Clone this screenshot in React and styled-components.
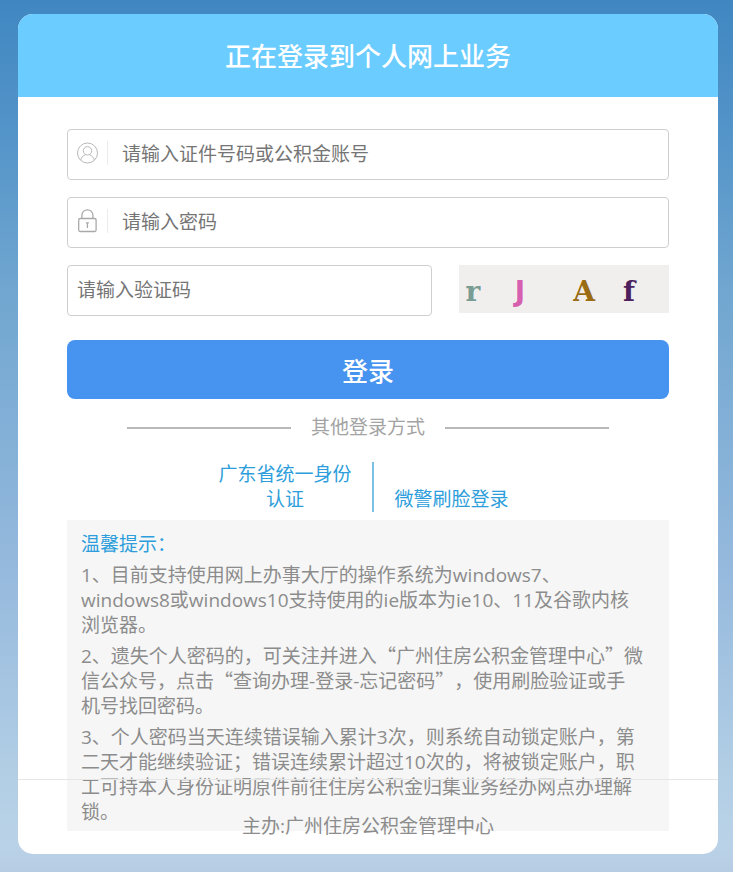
import React from 'react'
import styled, { createGlobalStyle } from 'styled-components'

const notes = [
    <>1、目前支持使用网上办事大厅的操作系统为windows7、<br/>windows8或windows10支持使用的ie版本为ie10、11及谷歌内核<br/>浏览器。</>,
    <>2、遗失个人密码的，可关注并进入<q>广州住房公积金管理中心</q>微<br/>信公众号，点击<q>查询办理-登录-忘记密码</q>，使用刷脸验证或手<br/>机号找回密码。</>,
    <>3、个人密码当天连续错误输入累计3次，则系统自动锁定账户，第<br/>二天才能继续验证；错误连续累计超过10次的，将被锁定账户，职<br/>工可持本人身份证明原件前往住房公积金归集业务经办网点办理解<br/>锁。</>,
]

const UserIcon = () => (
    <svg width="22" height="22" viewBox="0 0 22 22" fill="none" stroke="#b9b9b9" strokeWidth="1">
        <circle cx="10.5" cy="11" r="10"/>
        <circle cx="10.5" cy="8.8" r="4.2"/>
        <path d="M3.7 18.2c.5-2.9 2.3-4.5 4.8-5.4M17.3 18.2c-.5-2.9-2.3-4.5-4.8-5.4"/>
    </svg>
)

const LockIcon = () => (
    <svg width="22" height="24" viewBox="0 0 22 24" fill="none" stroke="#a9a9a9" strokeWidth="1.3">
        <rect x="1.7" y="9.5" width="17.4" height="13" rx="1.5"/>
        <path d="M4.9 9.5V6.300a5.500 5.500 0 0 1 11 0v3.200"/>
        <path d="M10.400 13.500v5.500M8.900 13.800h3"/>
    </svg>
)

const Captcha = () => (
    <CaptchaButton type="button" aria-label="验证码">
        <svg width="210" height="48" viewBox="0 0 210 48" textAnchor="middle">
            <text x="14" y="36" fill="#7a9d93">r</text>
            <text x="61" y="36" fill="#d65fb0" className="sans">J</text>
            <text x="125" y="36" fill="#9a6c14">A</text>
            <text x="170" y="36" fill="#4d1f5c">f</text>
        </svg>
    </CaptchaButton>
)

export default function App() {
    return (
        <>
            <GlobalStyle/>
            <Card>
                <Header>
                    <h1>正在登录到个人网上业务</h1>
                </Header>
                <Content>
                    <LoginForm onSubmit={e => e.preventDefault()}>
                        <Field>
                            <IconBox><UserIcon/></IconBox>
                            <input type="text" aria-label="账号" placeholder="请输入证件号码或公积金账号"/>
                        </Field>
                        <Field>
                            <IconBox><LockIcon/></IconBox>
                            <input type="password" aria-label="密码" placeholder="请输入密码"/>
                        </Field>
                        <CaptchaRow>
                            <Field>
                                <input type="text" aria-label="验证码" placeholder="请输入验证码"/>
                            </Field>
                            <Captcha/>
                        </CaptchaRow>
                        <SubmitButton type="submit">登录</SubmitButton>
                    </LoginForm>
                    <OtherTitle>其他登录方式</OtherTitle>
                    <OtherLinks>
                        <a href="#identity">广东省统一身份认证</a>
                        <a href="#face">微警刷脸登录</a>
                    </OtherLinks>
                    <Notes>
                        <h2>温馨提示：</h2>
                        {notes.map((note, i) => <p key={i}>{note}</p>)}
                    </Notes>
                </Content>
                <Footer>主办:广州住房公积金管理中心</Footer>
            </Card>
        </>
    )
}

const GlobalStyle = createGlobalStyle`
    * {
        box-sizing: border-box;
    }
    html {
        min-height: 100%;
        background: linear-gradient(#4087c1 0%, #5394c9 15%, #70a6d0 33%, #95b9dd 65%, #b3cfe5 90%, #bad2e8 97%, #b6cce2 100%);
    }
    body {
        margin: 0;
        padding: 14px 15px 18px 18px;
        font-family: "Open Sans", "Noto Sans CJK SC", sans-serif;
        font-size: 19px;
        line-height: 25px;
        color: #8c8c8c;
    }
    h1, h2, p {
        margin: 0;
        font-size: inherit;
        font-weight: normal;
    }
    input, button {
        font: inherit;
    }
`

const Card = styled.main`
    position: relative;
    overflow: hidden;
    border-radius: 15px;
    background-color: #fff;
`

const Header = styled.header`
    padding: 26px 0 25px;
    text-align: center;
    background-color: #6bccff;
    color: #fff;
    h1 {
        font-size: 26px;
        font-weight: 500;
        line-height: 32px;
    }
`

const Content = styled.div`
    padding: 32px 49px 23px;
`

const LoginForm = styled.form`
    display: flex;
    flex-direction: column;
    gap: 17px;
`

const Field = styled.label`
    display: flex;
    flex: 1;
    align-items: center;
    min-width: 0;
    min-height: 51px;
    padding: 0 9px;
    border: 1px solid #cfcfcf;
    border-radius: 4px;
    input {
        flex: 1;
        min-width: 0;
        padding: 0;
        border: 0;
        outline: 0;
        background: transparent;
        color: #555;
        &::placeholder {
            color: #757575;
        }
    }
`

const IconBox = styled.span`
    display: flex;
    align-items: center;
    width: 31px;
    height: 24px;
    margin: 0 14px 4px 0;
    border-right: 1px solid #ececec;
`

const CaptchaRow = styled.div`
    display: flex;
    align-items: flex-start;
    gap: 27px;
`

const CaptchaButton = styled.button`
    display: block;
    height: 48px;
    padding: 0;
    border: 0;
    background-color: #f1efee;
    cursor: pointer;
    svg {
        display: block;
    }
    text {
        font-family: "DejaVu Serif", serif;
        font-size: 28px;
        font-weight: bold;
    }
    .sans {
        font-family: "DejaVu Sans", sans-serif;
    }
`

const SubmitButton = styled.button`
    height: 59px;
    margin-top: 7px;
    padding: 3px 0 0;
    border: 0;
    border-radius: 8px;
    background-color: #4793f0;
    color: #fff;
    font-size: 26px;
    font-weight: 500;
    cursor: pointer;
`

const OtherTitle = styled.div`
    display: flex;
    align-items: center;
    gap: 20px;
    margin: 16px 60px 22px;
    color: #a3a3a3;
    &::before, &::after {
        content: "";
        flex: 1;
        height: 2px;
        background-color: #b8b8b8;
    }
`

const OtherLinks = styled.nav`
    display: flex;
    justify-content: center;
    align-items: flex-end;
    margin: 0 10px 8px 0;
    a {
        padding: 0 20px;
        text-align: center;
        text-decoration: none;
        color: #2d9edb;
    }
    a:first-child {
        width: 177px;
        border-right: 2px solid #7cc0e4;
    }
`

const Notes = styled.section`
    display: flex;
    flex-direction: column;
    gap: 6px;
    padding: 12px 14px 6px;
    background-color: #f6f6f6;
    text-spacing-trim: space-all;
    h2 {
        color: #2d9edb;
    }
    q {
        quotes: "“" "”";
    }
    q::before, q::after {
        font-family: "Noto Sans CJK SC", sans-serif;
        line-height: 1;
    }
`

const Footer = styled.footer`
    position: absolute;
    right: 0;
    bottom: 0;
    left: 0;
    padding: 34px 0 15px;
    border-top: 1px solid #e6e6e6;
    text-align: center;
`
